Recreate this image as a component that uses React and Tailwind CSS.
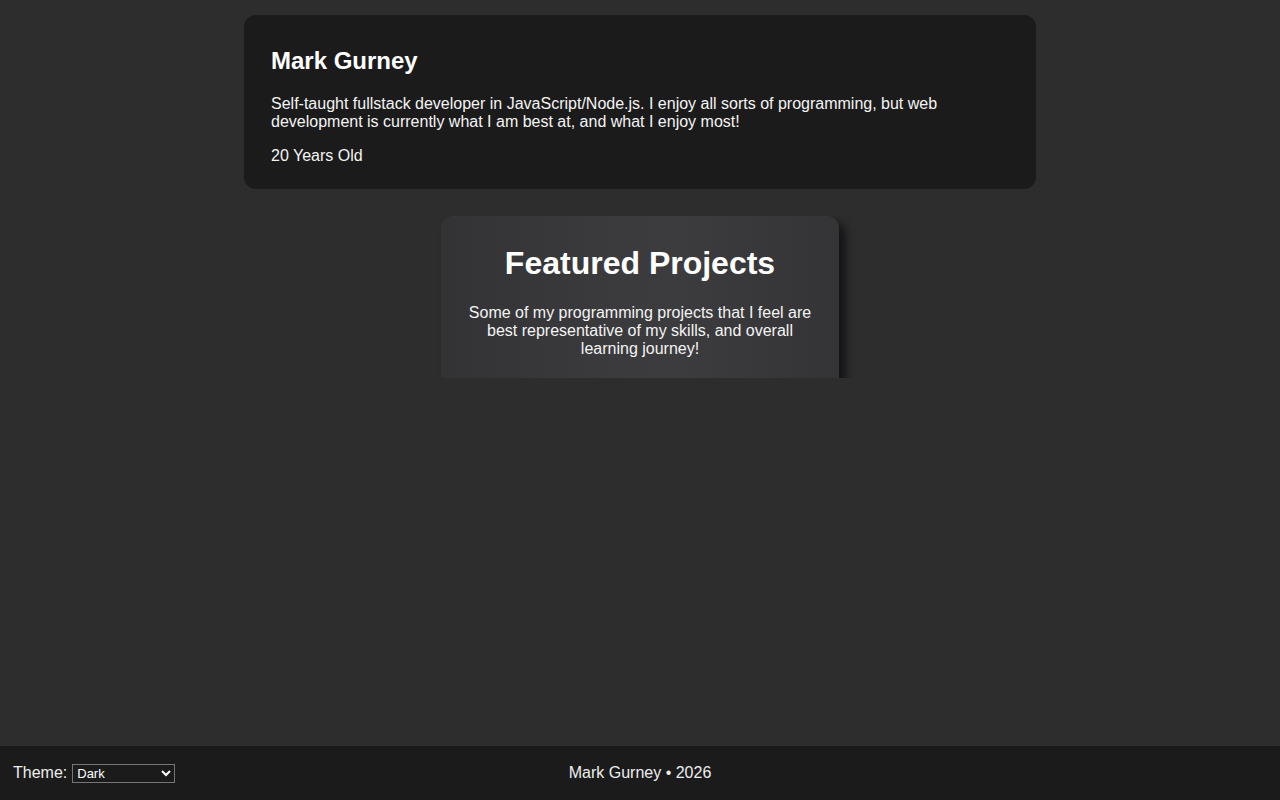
import React from "react";

export default function App() {
  return (
    <div
      className="min-h-screen flex flex-col bg-[#2d2d2d] text-white"
      style={{ fontFamily: '"Liberation Sans", Arial, sans-serif' }}
    >
      <main className="flex-1 flex flex-col items-center pt-[15px]">
        {/* About card */}
        <section className="w-[792px] rounded-[12px] bg-[#1b1b1b] px-[27px] pt-[32px] pb-[24px]">
          <h2 className="text-[24px] leading-[27px] font-bold">Mark Gurney</h2>
          <p className="mt-[21px] text-[16px] leading-[18px] text-[#f4f4f4]">
            Self-taught fullstack developer in JavaScript/Node.js. I enjoy all
            sorts of programming, but web development is currently what I am
            best at, and what I enjoy most!
          </p>
          <p className="mt-[16px] text-[16px] leading-[18px] text-[#f4f4f4]">
            20 Years Old
          </p>
        </section>

        {/* Featured projects, clipped by its container */}
        <div className="mt-[27px] w-[440px] h-[162px] overflow-hidden flex justify-center">
          <div className="w-[398px] h-[260px] rounded-[12px] bg-[linear-gradient(90deg,#333335_0%,#3b3b3d_45%,#3c3c3e_60%,#343436_100%)] shadow-[7px_6px_8px_rgba(0,0,0,0.55)] px-[26px] pt-[29px] text-center">
            <h1 className="text-[32px] leading-[37px] font-bold">
              Featured Projects
            </h1>
            <p className="mt-[22px] text-[16px] leading-[18px] text-[#f4f4f4]">
              Some of my programming projects that I feel are best
              representative of my skills, and overall learning journey!
            </p>
          </div>
        </div>
      </main>

      <footer className="h-[54px] bg-[#1b1b1b] grid grid-cols-3 items-center px-[13px] text-[16px]">
        <div className="flex items-center gap-[5px]">
          <span className="text-[#eeeeee]">Theme:</span>
          <select
            defaultValue="dark"
            className="w-[103px] h-[19px] bg-[#1b1b1b] text-white text-[13px] border border-[#767676] rounded-none"
          >
            <option value="dark">Dark</option>
            <option value="light">Light</option>
          </select>
        </div>
        <div className="text-center text-[#eeeeee]">Mark Gurney • 2026</div>
        <div />
      </footer>
    </div>
  );
}
